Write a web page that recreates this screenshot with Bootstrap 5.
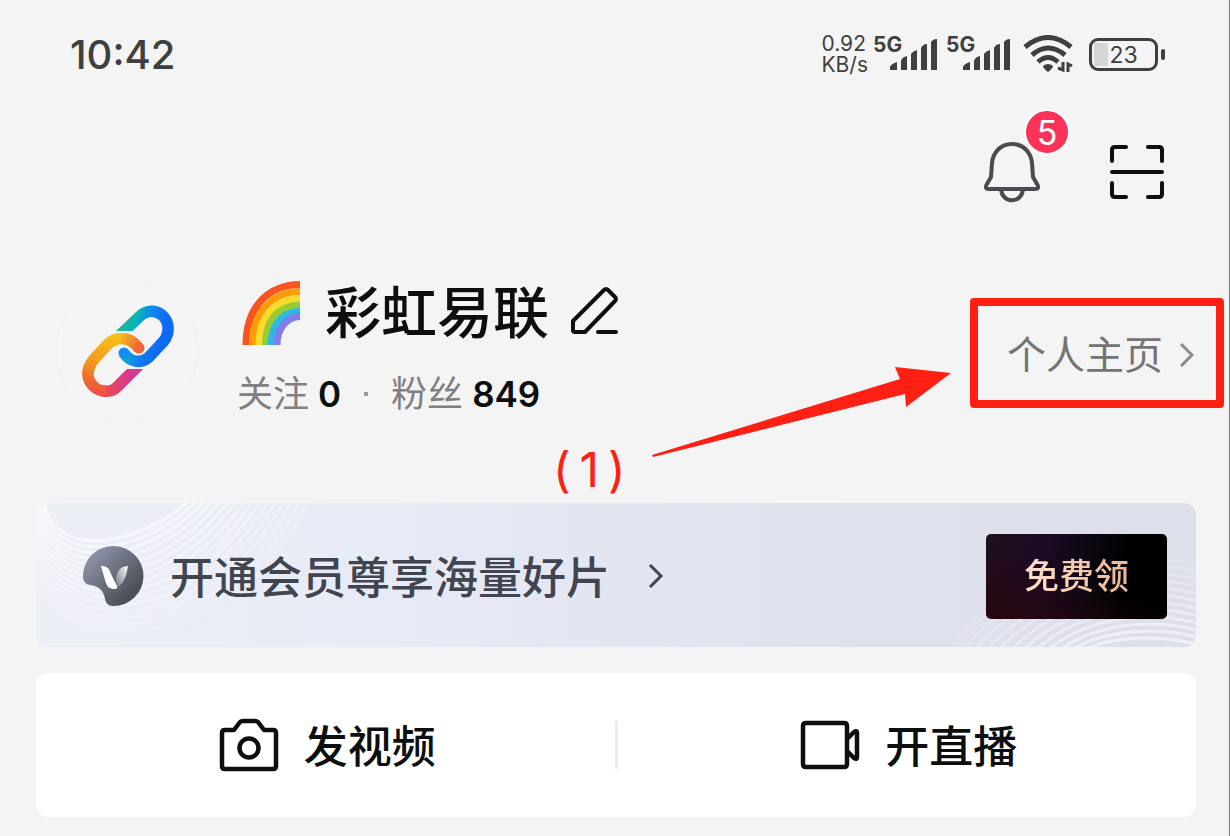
<!DOCTYPE html>
<html lang="zh-CN">
<head>
<meta charset="utf-8">
<meta name="viewport" content="width=device-width, initial-scale=1">
<title>个人中心</title>
<link href="https://cdn.jsdelivr.net/npm/bootstrap@5.3.0/dist/css/bootstrap.min.css" rel="stylesheet">
<style>
  body { background: #f4f4f4; color: #0d0e10; font-family: Inter, "Noto Sans CJK SC", sans-serif; }
  svg { display: block; flex: none; }
  .page-frame { min-height: 100vh; border-right: 1px solid #777; border-bottom: 1px solid #777; }
  .status { padding: 0 64px 0 70px; height: 108px; color: #3f3f3f; }
  .clock { font-size: 40px; font-weight: 500; line-height: 48px; padding-top: 2px; }
  .speed { font-size: 21px; line-height: 21px; margin-right: 5px; }
  .gen { font-size: 21px; font-weight: 700; line-height: 20px; width: 29px; margin-top: -2px; }
  .bars { margin: 2px 0 0 -12px; }
  .battery { width: 69px; height: 33px; border: 3px solid #3f3f3f; border-radius: 9px; font-size: 23px; line-height: 28px;
    background: linear-gradient(#d6d6d6, #d6d6d6) 2px 2px / 14px 23px no-repeat; }
  .battery-tip { width: 4px; height: 11px; border-radius: 2px; background: #3f3f3f; margin-left: 3px; }
  .actions { height: 128px; padding-right: 65px; gap: 70px; }
  .plain { border: 0; padding: 0; background: none; color: inherit; }
  .count { top: -32px; left: 40px; width: 46px; height: 46px; border: 2px solid #fff; border-radius: 50%; background: #fd3259;
    color: #fff; font-size: 34px; line-height: 44px; }
  .profile { padding: 45px 5px 78px 55px; }
  .info { margin-left: 38px; }
  .nick { font-size: 56px; font-weight: 500; line-height: 64px; margin: 0 22px 0 24px; }
  .edit { margin-bottom: 6px; }
  .stats { margin-top: 25px; font-size: 36px; line-height: 48px; color: #808080; }
  .stats a { color: inherit; text-decoration: none; }
  .stats strong { font-size: 35px; font-weight: 600; color: #0d0e10; margin-left: 9px; }
  .dot { width: 4px; height: 4px; background: #999; margin: 0 23px; }
  .home-link { height: 110px; border: 8px solid #ff2013; border-radius: 4px; padding: 4px 22px 0 29px; gap: 16px; margin-top: 17px;
    font-size: 39px; line-height: 48px; color: #747474; text-decoration: none; }
  .step { left: 553px; top: 210px; font-size: 48px; line-height: 48px; color: #ff2013; gap: 9px; }
  .arrow { right: 277px; top: 126px; }
  .cards { padding: 0 33px 19px 36px; gap: 26px; }
  .vip { height: 144px; border-radius: 12px; padding: 2px 29px 0 47px; color: #41454f;
    background: linear-gradient(90deg, #eceff5, #e7ebf6 30%, #e0e2ee 65%, #dcdeea); }
  .vip-title { font-size: 44px; font-weight: 500; line-height: 56px; margin: 0 0 0 25px; color: inherit; text-decoration: none; gap: 38px; }
  .text-drop { padding-top: 4px; }
  .claim { width: 181px; height: 85px; border-radius: 5px; font-size: 35px; font-weight: 500;
    background: linear-gradient(20deg, #26060d, transparent 50%), linear-gradient(100deg, #21101c, #1c0a24 30%, #08060d 60%, #000 75%); }
  .claim span { background: linear-gradient(90deg, #ffdfcf, #efb790); -webkit-background-clip: text; background-clip: text; color: transparent; }
  .tools { height: 144px; border-radius: 12px; }
  .tool { gap: 25px; font-size: 44px; font-weight: 500; line-height: 56px; padding-left: 4px; }
  .rule { width: 3px; height: 48px; background: #ebebeb; }
</style>
</head>
<body>
<main class="page-frame">
  <header class="status d-flex align-items-center justify-content-between">
    <div class="clock">10:42</div>
    <div class="d-flex align-items-center">
      <div class="speed"><div>0.92</div><div>KB/s</div></div>
      <div class="d-flex align-items-start me-2">
        <span class="gen">5G</span>
        <svg class="bars" width="48" height="32" fill="#3f3f3f"><path d="M0 31V28Q1 25 7 23V31ZM11 31V22Q12 18 17 17V31ZM21 31V15Q23 12 27 11V31ZM31 31V9Q33 5 37 5V31ZM41 31V3Q43 0 47 0V31Z"/></svg>
      </div>
      <div class="d-flex align-items-start">
        <span class="gen">5G</span>
        <svg class="bars" width="48" height="32" fill="#3f3f3f"><path d="M0 31V28Q1 25 7 23V31ZM11 31V22Q12 18 17 17V31ZM21 31V15Q23 12 27 11V31ZM31 31V9Q33 5 37 5V31ZM41 31V3Q43 0 47 0V31Z"/></svg>
      </div>
      <svg class="ms-2 me-3" width="54" height="38" viewBox="-5 0 54 38" fill="none" stroke="#3f3f3f" stroke-width="5"><path d="M1 12Q24-7 47 12M8 20Q24 6 41 20M14 27Q24 18 34 27"/><path d="M19 31Q24 27 29 31Q29 33 24 37Q19 33 19 31Z" fill="#3f3f3f" stroke="none"/><path d="M39 27V35L34 33M44 37V29L48 31" stroke-width="3"/></svg>
      <div class="battery text-center">23</div><div class="battery-tip"></div>
    </div>
  </header>

  <div class="actions d-flex align-items-center justify-content-end">
    <button class="plain position-relative" type="button" aria-label="消息">
      <svg width="56" height="62" viewBox="0 0 56 62" fill="none" stroke="#4a4c51" stroke-width="4" stroke-linejoin="round"><path d="M28 3C16 3 9 12 8 22L7 36L3 43Q0 48 5 48H51Q56 48 53 43L49 36L48 22C47 12 40 3 28 3Z"/><path d="M17 48C18 63 38 63 39 48"/></svg>
      <span class="count position-absolute">5</span>
    </button>
    <button class="plain" type="button" aria-label="扫一扫">
      <svg width="54" height="54" viewBox="0 0 54 54" fill="none" stroke="#0d0e10" stroke-width="4" stroke-linecap="round" stroke-linejoin="round"><path d="M2 16V5Q2 2 5 2H16M38 2H49Q52 2 52 5V16M52 38V49Q52 52 49 52H38M16 52H5Q2 52 2 49V38M2 27H52"/></svg>
    </button>
  </div>

  <section class="profile position-relative d-flex align-items-start">
    <svg width="144" height="144" viewBox="55 281 144 144" fill="none" stroke-width="11.5">
      <defs>
        <linearGradient id="cool" gradientUnits="userSpaceOnUse" x1="118" y1="325" x2="160" y2="340"><stop offset="0" stop-color="#23b68c"/><stop offset=".35" stop-color="#08b5b7"/><stop offset=".6" stop-color="#1188ee"/><stop offset="1" stop-color="#0d6af3"/></linearGradient>
        <linearGradient id="warm" gradientUnits="userSpaceOnUse" x1="115" y1="336" x2="105" y2="398"><stop offset="0" stop-color="#f5c21a"/><stop offset=".45" stop-color="#f59a1d"/><stop offset=".75" stop-color="#ef6a30"/><stop offset="1" stop-color="#ee4b48"/></linearGradient>
        <linearGradient id="tail" gradientUnits="userSpaceOnUse" x1="118" x2="141" y1="338" y2="349"><stop offset="0" stop-color="#f5bf1b"/><stop offset="1" stop-color="#f0603a"/></linearGradient>
        <linearGradient id="pink" gradientUnits="userSpaceOnUse" x1="102" x2="132" y1="0" y2="0"><stop offset="0" stop-color="#ee4b48"/><stop offset="1" stop-color="#d43795"/></linearGradient>
      </defs>
      <circle cx="127" cy="351" r="71" stroke="#f0f0f0" stroke-width="1"/>
      <path d="M104 391C110 392 114 390 117 387L141 363" stroke="url(#pink)"/>
      <rect x="122" y="358" width="32" height="11" fill="#f4f4f4"/>
      <path d="M124 353C129 361 140 365 149 357L163 342C170 334 170 322 162 315C154 309 145 311 139 317L115 340" stroke="url(#cool)"/>
      <circle cx="124" cy="353" r="5.5" fill="#118cf4"/>
      <rect x="106" y="331" width="27" height="14" fill="#f4f4f4"/>
      <path d="M122 338.500C117 338.500 112 340 108 344L95 358C80 375 92 391 106 391" stroke="url(#warm)"/>
      <path d="M139 349C134 341 128 338.500 121 338.500" stroke="url(#tail)"/>
      <circle cx="139" cy="348" r="5.5" fill="#f0693a"/>
    </svg>
    <div class="info">
      <div class="d-flex align-items-center">
        <svg width="64" height="64" fill="none" stroke-width="7" viewBox="-6 0 64 64"><path d="M3 64C3 27 24 4 57 3.500" stroke="#fa5420"/><path d="M9.500 64C9.500 31 29 11 57 10.500" stroke="#ff9a09"/><path d="M16 64C16 35 32 18 57 17.500" stroke="#f9dc2b"/><path d="M22.500 64C22.500 39 35 25 57 24" stroke="#98ca36"/><path d="M28 64C28 43 40 31 57 30" stroke="#2eb9e4"/><path d="M34 64C34 47 44 36 57 35.500" stroke="#827cec"/></svg>
        <h1 class="nick">彩虹易联</h1>
        <button class="edit plain" type="button" aria-label="编辑昵称"><svg width="48" height="48" viewBox="0 0 48 48" fill="none" stroke="#0d0e10" stroke-width="4" stroke-linejoin="round" stroke-linecap="round"><path d="M2 35L33 4Q35 2 37 4L44 11Q46 13 44 15L14 46H4Q2 46 2 44ZM27 46H45"/></svg></button>
      </div>
      <div class="stats d-flex align-items-center">
        <a href="#following">关注<strong>0</strong></a><span class="dot"></span><a href="#fans">粉丝<strong>849</strong></a>
      </div>
    </div>
    <a class="home-link d-flex align-items-center ms-auto" href="#home">个人主页
      <svg width="15" height="24" fill="none" stroke="#8c8c8c" stroke-width="3"><path d="M2 1L13 12L2 23"/></svg>
    </a>
    <div class="step position-absolute d-flex"><span>(</span><span>1</span><span>)</span></div>
    <svg class="arrow position-absolute" width="302" height="100" viewBox="650 362 302 100" fill="#ff2013"><path d="M652 455L900 379L895 367L951 373L906 407L905 394L653 457Z"/></svg>
  </section>

  <div class="cards d-flex flex-column">
    <section class="vip position-relative overflow-hidden d-flex align-items-center">
      <svg id="waves-left" class="position-absolute top-0 start-0" width="300" height="144" fill="none" stroke="#fff" stroke-width="3"></svg>
      <svg id="waves-right" class="position-absolute top-0 end-0" width="260" height="144" fill="none" stroke="#fff" stroke-width="3"></svg>
      <svg class="position-relative" width="62" height="62" viewBox="0 0 62 62">
        <defs><linearGradient id="orb" x1="0" y1="0" x2="1" y2="1"><stop offset=".15" stop-color="#8b91a5"/><stop offset=".8" stop-color="#4d5058"/></linearGradient>
        <linearGradient id="wing" x1="1" y1="0" x2="0" y2="1"><stop offset="0" stop-color="#fff"/><stop offset="1" stop-color="#777b88"/></linearGradient></defs>
        <path d="M31 1A30 30 0 1 1 30 61C25 61 23 58 22 54C20 44 15 41 7 40C2 39 0 36 0 31C1 13 14 1 31 1Z" fill="url(#orb)"/>
        <path d="M33 34C34 25 38 21 45 21C43 33 40 39 34 42Z" fill="url(#wing)"/>
        <path d="M18 21C24 21 26 23 28 29L34 41Q35 44 32 44C26 44 24 42 22 35Z" fill="#fff"/>
      </svg>
      <a class="vip-title position-relative d-flex align-items-center" href="#vip"><span class="text-drop">开通会员尊享海量好片</span>
        <svg width="16" height="28" fill="none" stroke="#41454f" stroke-width="3"><path d="M2 3L13 14L2 25"/></svg>
      </a>
      <button class="claim plain position-relative ms-auto" type="button"><span>免费领</span></button>
    </section>

    <section class="tools bg-white d-flex align-items-center">
      <button class="tool plain d-flex align-items-center justify-content-center flex-fill" type="button">
        <svg width="60" height="54" viewBox="0 0 60 54" fill="none" stroke="#0d0e10" stroke-width="4.5" stroke-linejoin="round"><path d="M3 15Q3 12 6 12H15L21 4Q22 3 24 3H36Q38 3 39 4L45 12H54Q57 12 57 15V48Q57 51 54 51H6Q3 51 3 48Z"/><circle cx="30" cy="30" r="9.5"/></svg>
        <span class="text-drop">发视频</span>
      </button>
      <div class="rule"></div>
      <button class="tool plain d-flex align-items-center justify-content-center flex-fill" type="button">
        <svg width="60" height="50" viewBox="0 0 60 50" fill="none" stroke="#0d0e10" stroke-width="4.5" stroke-linejoin="round"><path d="M6 3H44Q47 3 47 6V44Q47 47 44 47H6Q3 47 3 44V6Q3 3 6 3ZM47 19L54 12Q57 10 57 13V37Q57 40 54 38L47 31"/></svg>
        <span class="text-drop">开直播</span>
      </button>
    </section>
  </div>
</main>
<script>
  // Fills an SVG with cubic curves blended from an inner outline to an outer one.
  function drawWaves(id, inner, outer, count) {
    const svg = document.getElementById(id);
    for (let i = 0; i < count; i++) {
      const t = i / (count - 1);
      const p = inner.map((v, k) => v + (outer[k] - v) * t);
      const path = document.createElementNS('http://www.w3.org/2000/svg', 'path');
      path.setAttribute('d', `M${p[0]} ${p[1]}C${p.slice(2).join(' ')}`);
      path.setAttribute('opacity', 0.55 - 0.4 * t);
      svg.appendChild(path);
    }
  }
  drawWaves('waves-left', [9, 0, 14, 50, 90, 50, 151, 0], [-30, 0, -10, 178, 180, 178, 271, 0], 16);
  drawWaves('waves-right', [150, 146, 180, 132, 230, 132, 262, 142], [14, 146, 90, 60, 180, 42, 262, 62], 12);
</script>
<script src="https://cdn.jsdelivr.net/npm/bootstrap@5.3.0/dist/js/bootstrap.bundle.min.js"></script>
</body>
</html>
